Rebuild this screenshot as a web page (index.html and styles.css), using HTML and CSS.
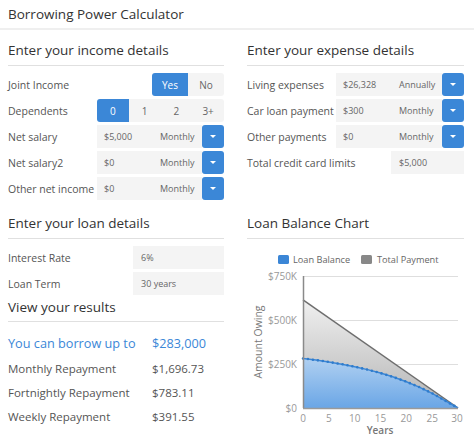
FILE: index.html
```html
<!DOCTYPE html>
<html lang="en">
<head>
<meta charset="utf-8">
<title>Borrowing Power Calculator</title>
<link rel="stylesheet" href="styles.css">
</head>
<body>
<header class="top"><h1 class="title">Borrowing Power Calculator</h1></header>
<main class="grid">
  <section class="panel">
    <h2 class="heading">Enter your income details</h2>
    <div class="row first">
      <span class="lbl">Joint Income</span>
      <div class="seg seg-right"><span class="opt opt-yn on">Yes</span><span class="opt opt-yn">No</span></div>
    </div>
    <div class="row">
      <span class="lbl">Dependents</span>
      <div class="seg"><span class="opt opt-dep on">0</span><span class="opt opt-dep">1</span><span class="opt opt-dep">2</span><span class="opt opt-dep">3+</span></div>
    </div>
    <div class="row">
      <span class="lbl">Net salary</span>
      <div class="field"><span class="val">$5,000</span><span class="freq">Monthly</span></div><span class="dd"></span>
    </div>
    <div class="row">
      <span class="lbl">Net salary2</span>
      <div class="field"><span class="val">$0</span><span class="freq">Monthly</span></div><span class="dd"></span>
    </div>
    <div class="row">
      <span class="lbl">Other net income</span>
      <div class="field"><span class="val">$0</span><span class="freq">Monthly</span></div><span class="dd"></span>
    </div>
  </section>

  <section class="panel">
    <h2 class="heading">Enter your expense details</h2>
    <div class="row first">
      <span class="lbl">Living expenses</span>
      <div class="field"><span class="val">$26,328</span><span class="freq">Annually</span></div><span class="dd"></span>
    </div>
    <div class="row">
      <span class="lbl">Car loan payment</span>
      <div class="field"><span class="val">$300</span><span class="freq">Monthly</span></div><span class="dd"></span>
    </div>
    <div class="row">
      <span class="lbl">Other payments</span>
      <div class="field"><span class="val">$0</span><span class="freq">Monthly</span></div><span class="dd"></span>
    </div>
    <div class="row">
      <span class="lbl lbl-wide">Total credit card limits</span>
      <div class="box box-card">$5,000</div>
    </div>
  </section>

  <section class="panel">
    <h2 class="heading">Enter your loan details</h2>
    <div class="row first">
      <span class="lbl">Interest Rate</span>
      <div class="box box-loan">6%</div>
    </div>
    <div class="row">
      <span class="lbl">Loan Term</span>
      <div class="box box-loan">30 years</div>
    </div>
    <h2 class="heading heading-results">View your results</h2>
    <div class="result-main"><span class="res-lbl">You can borrow up to</span><span>$283,000</span></div>
    <div class="result-row result-first"><span class="res-lbl">Monthly Repayment</span><span>$1,696.73</span></div>
    <div class="result-row"><span class="res-lbl">Fortnightly Repayment</span><span>$783.11</span></div>
    <div class="result-row"><span class="res-lbl">Weekly Repayment</span><span>$391.55</span></div>
  </section>

  <section class="panel">
    <h2 class="heading">Loan Balance Chart</h2>
    <svg class="chart" width="217" height="195" viewBox="0 0 217 195">
      <defs>
        <linearGradient id="gGray" x1="0" y1="0" x2="0" y2="1">
          <stop offset="0" stop-color="#f0f0f0"/>
          <stop offset="1" stop-color="#b4b4b4"/>
        </linearGradient>
        <linearGradient id="gBlue" x1="0" y1="0" x2="0" y2="1">
          <stop offset="0" stop-color="#b0d0f1"/>
          <stop offset="1" stop-color="#6aa6e6"/>
        </linearGradient>
      </defs>
      <rect x="31" y="10" width="11" height="9" rx="1.5" fill="#3b86d6"/>
      <text class="legend" x="46" y="18">Loan Balance</text>
      <rect x="114" y="10" width="11" height="9" rx="1.5" fill="#888"/>
      <text class="legend" x="130" y="18">Total Payment</text>
      <line class="gridline" x1="56" y1="31.5" x2="211" y2="31.5"/>
      <line class="gridline" x1="56" y1="75.5" x2="211" y2="75.5"/>
      <line class="gridline" x1="56" y1="119.5" x2="211" y2="119.5"/>
      <text class="axis" x="50" y="35" text-anchor="end">$750K</text>
      <text class="axis" x="50" y="79" text-anchor="end">$500K</text>
      <text class="axis" x="50" y="123" text-anchor="end">$250K</text>
      <text class="axis" x="50" y="167" text-anchor="end">$0</text>
      <text class="axis-title" transform="translate(15 97) rotate(-90)" text-anchor="middle">Amount Owing</text>
      <polygon points="56,54.9 211,163 56,163" fill="url(#gGray)"/>
      <polygon points="56,113.43 68.92,115.06 81.83,116.95 94.75,119.14 107.67,121.69 120.58,124.64 133.5,128.08 146.42,132.06 159.33,136.69 172.25,142.07 185.17,148.32 198.08,155.57 211,163 56,163" fill="url(#gBlue)"/>
      <line x1="56" y1="54.9" x2="211" y2="163" stroke="#6e6e6e" stroke-width="1.5"/>
      <polyline points="56,113.43 68.92,115.06 81.83,116.95 94.75,119.14 107.67,121.69 120.58,124.64 133.5,128.08 146.42,132.06 159.33,136.69 172.25,142.07 185.17,148.32 198.08,155.57 211,163" fill="none" stroke="#3b86d6" stroke-width="1.5"/>
      <polyline points="56,113.43 68.92,115.06 81.83,116.95 94.75,119.14 107.67,121.69 120.58,124.64 133.5,128.08 146.42,132.06 159.33,136.69 172.25,142.07 185.17,148.32 198.08,155.57 211,163" fill="none" stroke="#2f7ccc" stroke-width="2.6" stroke-linecap="round" stroke-dasharray="0 5"/>
      <line x1="56.5" y1="31" x2="56.5" y2="163" stroke="#8a8a8a" stroke-width="1.5"/>
      <line x1="56" y1="163.5" x2="211" y2="163.5" stroke="#9a9a9a" stroke-width="1.5"/>
      <text class="axis" x="56" y="176.5" text-anchor="middle">0</text>
      <text class="axis" x="81.8" y="176.5" text-anchor="middle">5</text>
      <text class="axis" x="107.7" y="176.5" text-anchor="middle">10</text>
      <text class="axis" x="133.5" y="176.5" text-anchor="middle">15</text>
      <text class="axis" x="159.3" y="176.5" text-anchor="middle">20</text>
      <text class="axis" x="185.2" y="176.5" text-anchor="middle">25</text>
      <text class="axis" x="210" y="176.5" text-anchor="middle">30</text>
      <text class="axis-title axis-years" x="133" y="189" text-anchor="middle">Years</text>
    </svg>
  </section>
</main>
</body>
</html>
```

FILE: styles.css
```css
* { box-sizing: border-box; }
html, body { margin: 0; padding: 0; background: #fff; }
body {
  font-family: "Open Sans", "Noto Sans", "Liberation Sans", sans-serif;
  color: #555;
  width: 474px;
  height: 444px;
  overflow: hidden;
}
.top {
  height: 30px;
  border-bottom: 2px solid #efefef;
  padding: 0 8px;
}
.title {
  margin: 0;
  font-size: 13.5px;
  font-weight: 400;
  line-height: 28px;
  color: #333;
}
.grid {
  display: grid;
  grid-template-columns: 216px 217px;
  column-gap: 23px;
  row-gap: 13px;
  padding: 10px 8px 0 8px;
  align-items: start;
}
.heading {
  margin: 0;
  font-size: 13.5px;
  font-weight: 400;
  line-height: 20px;
  color: #333;
  padding-bottom: 5px;
  border-bottom: 1px solid #e0e0e0;
}
.heading-results { margin-top: 2px; padding-bottom: 4px; }
.row {
  display: flex;
  align-items: center;
  height: 23px;
  margin-top: 3px;
}
.row.first { margin-top: 7px; }
.lbl {
  flex: 0 0 89px;
  font-size: 10.5px;
  white-space: nowrap;
  color: #555;
}
.lbl-wide { flex: 0 0 auto; }
.seg { display: flex; height: 23px; }
.seg-right { margin-left: auto; }
.opt {
  display: flex;
  align-items: center;
  justify-content: center;
  background: #f4f4f4;
  font-size: 10px;
  color: #666;
}
.opt-yn { width: 36px; }
.opt-dep { width: 31.75px; }
.opt.on { background: #3b87d7; color: #fff; }
.seg .opt:first-child { border-radius: 3px 0 0 3px; }
.seg .opt:last-child { border-radius: 0 3px 3px 0; }
.field {
  flex: 1;
  display: flex;
  align-items: center;
  height: 23px;
  background: #f4f4f4;
  font-size: 9px;
  color: #666;
}
.val { flex: 0 0 55px; padding-left: 7px; }
.freq { padding-left: 8px; }
.dd {
  flex: 0 0 22px;
  height: 23px;
  background: #3b87d7;
  border-radius: 3px;
  display: flex;
  align-items: center;
  justify-content: center;
}
.dd::after {
  content: "";
  border-left: 3px solid transparent;
  border-right: 3px solid transparent;
  border-top: 3px solid #fff;
}
.box {
  margin-left: auto;
  height: 23px;
  display: flex;
  align-items: center;
  background: #f4f4f4;
  font-size: 9px;
  color: #666;
  padding-left: 8px;
}
.box-card { width: 73px; }
.box-loan { width: 91px; }
.result-main {
  display: flex;
  margin-top: 11px;
  font-size: 12.7px;
  line-height: 20px;
  color: #3b87d7;
}
.res-lbl { flex: 0 0 144px; white-space: nowrap; }
.result-row {
  display: flex;
  font-size: 11.5px;
  line-height: 24px;
  color: #555;
}
.result-first { margin-top: 4px; }
.chart { display: block; margin-top: 6px; }
.legend { font-size: 9.2px; fill: #666; }
.axis { font-size: 10px; fill: #999; }
.axis-title { font-size: 10.5px; fill: #777; }
.axis-years { font-weight: 600; font-size: 10px; }
.gridline { stroke: #dedede; stroke-width: 1; }
```
